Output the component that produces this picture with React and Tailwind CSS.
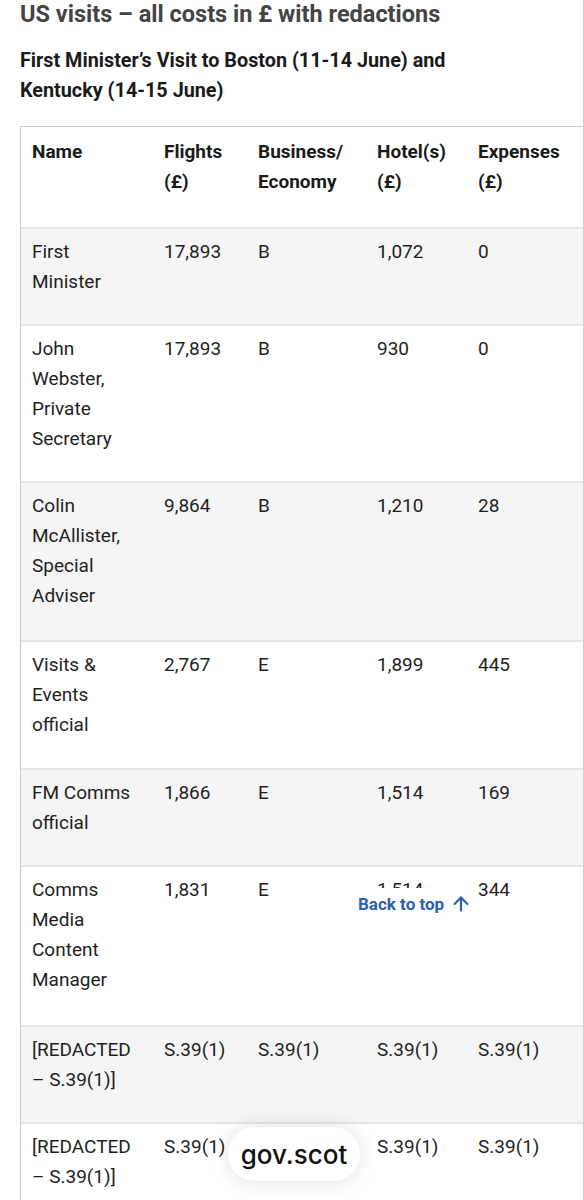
import React from "react";
import { ArrowUp } from "lucide-react";

const rows = [
  { name: ["First", "Minister"], flights: "17,893", cls: "B", hotel: "1,072", exp: "0", h: "h-[97px]" },
  { name: ["John", "Webster,", "Private", "Secretary"], flights: "17,893", cls: "B", hotel: "930", exp: "0", h: "h-[157px]" },
  { name: ["Colin", "McAllister,", "Special", "Adviser"], flights: "9,864", cls: "B", hotel: "1,210", exp: "28", h: "h-[159px]" },
  { name: ["Visits &", "Events", "official"], flights: "2,767", cls: "E", hotel: "1,899", exp: "445", h: "h-[128px]" },
  { name: ["FM Comms", "official"], flights: "1,866", cls: "E", hotel: "1,514", exp: "169", h: "h-[97px]" },
  { name: ["Comms", "Media", "Content", "Manager"], flights: "1,831", cls: "E", hotel: "1,514", exp: "344", h: "h-[160px]" },
  { name: ["[REDACTED", "– S.39(1)]"], flights: "S.39(1)", cls: "S.39(1)", hotel: "S.39(1)", exp: "S.39(1)", h: "h-[97px]" },
  { name: ["[REDACTED", "– S.39(1)]"], flights: "S.39(1)", cls: "S.39(1)", hotel: "S.39(1)", exp: "S.39(1)", h: "h-[97px]" },
];

const Lines = ({ lines }) => (
  <>
    {lines.map((l, i) => (
      <div key={i}>{l}</div>
    ))}
  </>
);

const Row = ({ children, className }) => (
  <div className={`grid grid-cols-[132px_94px_119px_101px_1fr] border-t-2 border-[#e6e6e6] ${className}`}>
    {children}
  </div>
);

const Cell = ({ children, top = "pt-[8px]" }) => <div className={`pl-[11px] ${top}`}>{children}</div>;

export default function App() {
  return (
    <div
      className="relative w-[584px] h-[1200px] overflow-hidden bg-white border-r border-[#cfcfcf] text-[#1f1f1f]"
      style={{ fontFamily: "Roboto, 'Liberation Sans', sans-serif" }}
    >
      <h1 className="pl-[20px] pt-[0px] text-[23.5px] leading-[28px] font-bold text-[#444]">
        US visits – all costs in £ with redactions
      </h1>
      <h2 className="pl-[20px] mt-[18px] text-[19.8px] leading-[30px] font-bold text-[#1a1a1a]">
        First Minister’s Visit to Boston (11-14 June) and
        <br />
        Kentucky (14-15 June)
      </h2>

      <div className="ml-[20px] mt-[20px] border-l border-t border-[#c8c8c8] text-[19px] leading-[30px]">
        <div className="grid grid-cols-[132px_94px_119px_101px_1fr] h-[100px] font-bold text-[#1a1a1a]">
          <Cell top="pt-[10px]">Name</Cell>
          <Cell top="pt-[10px]">
            <Lines lines={["Flights", "(£)"]} />
          </Cell>
          <Cell top="pt-[10px]">
            <Lines lines={["Business/", "Economy"]} />
          </Cell>
          <Cell top="pt-[10px]">
            <Lines lines={["Hotel(s)", "(£)"]} />
          </Cell>
          <Cell top="pt-[10px]">
            <Lines lines={["Expenses", "(£)"]} />
          </Cell>
        </div>
        {rows.map((r, i) => (
          <Row key={i} className={`${r.h} ${i % 2 === 0 ? "bg-[#f5f5f5]" : "bg-white"}`}>
            <Cell>
              <Lines lines={r.name} />
            </Cell>
            <Cell>{r.flights}</Cell>
            <Cell>{r.cls}</Cell>
            <Cell>{r.hotel}</Cell>
            <Cell>{r.exp}</Cell>
          </Row>
        ))}
      </div>

      <div className="absolute left-[350px] top-[888px] w-[126px] h-[32px] bg-white flex items-center gap-[6px] pl-[8px] whitespace-nowrap leading-none">
        <span className="text-[17px] font-bold text-[#2a62ae]">Back to top</span>
        <ArrowUp size={22} strokeWidth={2.4} className="text-[#2a62ae] shrink-0" />
      </div>

      <div className="absolute left-[228px] top-[1127px] w-[132px] h-[54px] rounded-full bg-white shadow-[0_0_22px_rgba(0,0,0,0.12)] flex items-center justify-center">
        <span className="text-[26px] font-medium text-[#111]" style={{ fontFamily: "Inter, Roboto, sans-serif" }}>
          gov.scot
        </span>
      </div>
    </div>
  );
}
